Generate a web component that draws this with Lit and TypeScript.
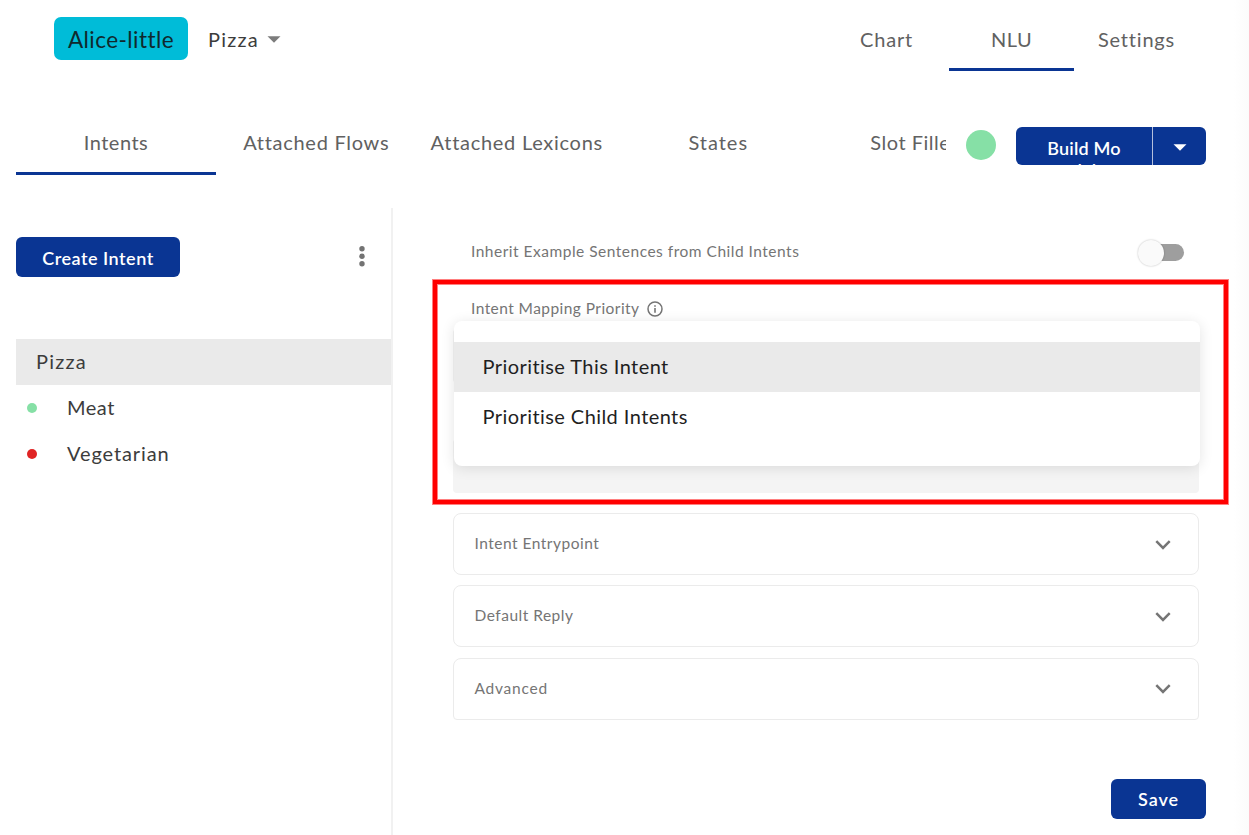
import { LitElement, html, css } from "lit";
import { customElement, property } from "lit/decorators.js";
import { classMap } from "lit/directives/class-map.js";

interface Tab { label: string; active?: boolean; cls: string; }

@customElement("nav-tab")
class NavTab extends LitElement {
  @property() label = "";
  @property({ type: Boolean, reflect: true }) active = false;
  static styles = css`
    :host { display: flex; align-items: center; justify-content: center; box-sizing: border-box;
      white-space: nowrap; border-bottom: 3px solid transparent; color: #616161; }
    :host([active]) { border-bottom-color: #0a3593; }
  `;
  render() { return html`<span>${this.label}</span>`; }
}

@customElement("accordion-row")
class AccordionRow extends LitElement {
  @property() label = "";
  static styles = css`
    :host { display: flex; align-items: center; justify-content: space-between; box-sizing: border-box;
      height: 62px; padding: 0 27px 0 20.5px; border: 1px solid #ebebeb; border-radius: 8px;
      font-size: 15.5px; color: #757575; }
    .chev { display: block; margin-top: 1px; }
    .label { margin-top: -2px; }
  `;
  render() {
    return html`<span class="label">${this.label}</span>
      <svg class="chev" width="16" height="10" viewBox="0 0 16 10">
        <path d="M1.3 1.2 L8 7.9 L14.7 1.2" fill="none" stroke="#757575" stroke-width="2.5" />
      </svg>`;
  }
}

@customElement("app-root")
class AppRoot extends LitElement {
  private intents = [
    { name: "Meat", ok: true },
    { name: "Vegetarian", ok: false },
  ];
  private sub: Tab[] = [
    { label: "Intents", active: true, cls: "t1" },
    { label: "Attached Flows", cls: "t2" },
    { label: "Attached Lexicons", cls: "t3" },
    { label: "States", cls: "t4" },
    { label: "Slot Fillers", cls: "t5" },
  ];

  static styles = css`
    :host { display: flex; flex-direction: column; position: relative; box-sizing: border-box; width: 100%;
      height: 835px; overflow: hidden; background: linear-gradient(to right, #fff 1234px, #fbfbfb 1249px);
      font-family: Lato, "Open Sans", sans-serif; font-size: 20px; letter-spacing: 0.5px; color: #3c3c3c; }
    svg { display: block; }
    .top { display: flex; height: 71px; padding: 0 50px 0 54px; flex: none; }
    .brand { margin-top: 17px; width: 134px; height: 43px; border-radius: 7px; background: #00bcd8; color: #10292d;
      font-size: 22.5px; line-height: 46px; text-align: center; letter-spacing: 0.45px; }
    .project { display: flex; align-items: center; gap: 8px; height: 79px; margin-left: 20px; }
    .pname { letter-spacing: 1.2px; margin-top: -2px; }
    .toptabs { display: flex; margin-left: auto; letter-spacing: 0.8px; }
    .toptabs nav-tab { width: 125px; padding-top: 10px; }
    .toptabs nav-tab[active] { letter-spacing: 0.5px; }
    .second { display: flex; flex: none; height: 69px; margin-top: 35px; padding: 0 43px 0 16px; }
    .subtabs { display: flex; width: 930px; overflow: hidden; letter-spacing: 0.72px; }
    .subtabs nav-tab { flex: 0 0 200.5px; padding-top: 6px; }
    .subtabs nav-tab[active] { flex-basis: 200px; letter-spacing: 0.5px; }
    .subtabs .t4 { letter-spacing: 1px; padding-left: 2px; }
    .subtabs .t5 { letter-spacing: 0.5px; padding-left: 2px; }
    .health { width: 30px; height: 30px; border-radius: 50%; background: #86e0a6; margin: 24px 20px 0; }
    .build { display: flex; width: 190px; height: 38px; margin-top: 21px; border-radius: 6px; overflow: hidden;
      background: #0a3593; color: #fff; font-weight: 600; font-size: 18px; letter-spacing: 0.2px; }
    .buildtext { flex: none; width: 137px; line-height: 22px; padding-top: 10px; text-align: center; box-sizing: border-box;
      border-right: 1px solid #b5c0dc; }
    .drop { flex: 1; display: flex; align-items: center; justify-content: center; padding-top: 3px; }
    .main { display: flex; flex: 1; margin-top: 33px; min-height: 0; }
    .side { width: 377px; margin-left: 16px; box-sizing: border-box; border-right: 2px solid #f1f1f1; padding-top: 29px; }
    .actions { display: flex; justify-content: space-between; align-items: center; height: 40px; padding-right: 24px; }
    .btn { display: flex; align-items: center; justify-content: center; height: 40px; border-radius: 6px; background: #0a3593; color: #fff;
      font-weight: 600; font-size: 18px; letter-spacing: 0.5px; padding-top: 1px; box-sizing: border-box; }
    .create { width: 164px; }
    .tree { margin-top: 62px; }
    .row { display: flex; align-items: center; height: 46px; padding-left: 11px; }
    .row.sel { background: #eaeaea; padding-left: 20px; letter-spacing: 1.2px; }
    .name { margin-top: -2px; }
    .long { letter-spacing: 0.9px; }
    .dot { width: 10px; height: 10px; border-radius: 50%; background: #e02424; margin-right: 30px; }
    .dot.ok { background: #86e0a6; }
    .panel { flex: 1; display: flex; flex-direction: column; padding: 0 43px 0 60px; }
    .setting { display: flex; align-items: center; font-size: 15.5px; color: #757575; padding-left: 18px; letter-spacing: 0.5px; }
    .setting span { margin-top: -2px; }
    .inherit { height: 30px; margin-top: 29px; justify-content: space-between; padding-right: 22px; }
    .switch { width: 43.5px; height: 17.5px; border-radius: 9px; background: #9e9e9e; display: flex; align-items: center; margin-top: 1px; }
    .knob { width: 26px; height: 26px; border-radius: 50%; background: #fafafa; margin-left: -3px; flex: none;
      box-shadow: 0 0 2px rgba(0,0,0,.28); }
    .priority { height: 24px; margin-top: 30px; gap: 7.5px; letter-spacing: 0.44px; }
    .info { margin-top: -1px; }
    .fields { position: relative; height: 172px; margin: 0 7px 0 0; display: flex; flex-direction: column; justify-content: space-between;
      padding-top: 8px; box-sizing: border-box; }
    .field { height: 54px; border-radius: 4px; background: #f4f4f4; }
    .menu { position: absolute; left: 1px; right: -1px; top: 0; height: 145px; box-sizing: border-box; padding-top: 21px; border-radius: 8px;
      background: #fff; box-shadow: 0 2px 14px rgba(0,0,0,.11); color: #1f1f1f; letter-spacing: 0.43px; }
    .item { display: flex; align-items: center; height: 50px; padding: 0 0 2px 28.5px; box-sizing: border-box; }
    .item.hi { background: #eaeaea; }
    .cards { display: flex; flex-direction: column; gap: 10.3px; margin: 20px 7px 0 0; }
    .cards accordion-row:last-child { border-radius: 8px 8px 4px 4px; letter-spacing: 0.75px; }
    .save { width: 95px; margin: 59.4px 0 0 auto; letter-spacing: 0.9px; }
    .mark { position: absolute; left: 433px; top: 280px; width: 795px; height: 224px; box-sizing: border-box; border: 4px solid #f00;
      box-shadow: 0 0 0 1px rgba(255,0,0,.5), inset 0 0 0 1px rgba(255,0,0,.5); }
  `;

  render() {
    return html`
      <header class="top">
        <div class="brand">Alice-little</div>
        <div class="project"><span class="pname">Pizza</span>
          <svg width="14" height="7" viewBox="0 0 14 7"><path d="M0.5 0.3H13.5L7 6.7z" fill="#7c7c7c"/></svg>
        </div>
        <nav class="toptabs">
          <nav-tab label="Chart"></nav-tab><nav-tab label="NLU" active></nav-tab><nav-tab label="Settings"></nav-tab>
        </nav>
      </header>
      <div class="second">
        <nav class="subtabs">${this.sub.map(t => html`<nav-tab class=${t.cls} .label=${t.label} ?active=${!!t.active}></nav-tab>`)}</nav>
        <div class="health"></div>
        <div class="build"><div class="buildtext">Build Mo<br>del</div>
          <div class="drop"><svg width="14" height="7" viewBox="0 0 14 7"><path d="M0.5 0.2H13.5L7 6.8z" fill="#fff"/></svg></div>
        </div>
      </div>
      <div class="main">
        <aside class="side">
          <div class="actions">
            <div class="btn create">Create Intent</div>
            <svg width="10" height="22" viewBox="0 0 10 22" fill="#737373"><circle cx="5" cy="2.8" r="2.7"/><circle cx="5" cy="10.3" r="2.7"/><circle cx="5" cy="17.8" r="2.7"/></svg>
          </div>
          <div class="tree">
            <div class="row sel"><span class="name">Pizza</span></div>
            ${this.intents.map(i => html`<div class="row"><i class=${classMap({ dot: true, ok: i.ok })}></i><span class=${classMap({ name: true, long: i.name.length > 5 })}>${i.name}</span></div>`)}
          </div>
        </aside>
        <section class="panel">
          <div class="setting inherit"><span>Inherit Example Sentences from Child Intents</span><div class="switch"><div class="knob"></div></div></div>
          <div class="setting priority"><span>Intent Mapping Priority</span>
            <svg class="info" width="16" height="16" viewBox="0 0 16 16"><circle cx="8" cy="8" r="7" fill="none" stroke="#757575" stroke-width="1.5"/><path d="M7.2 4.2h1.6v1.6H7.2zM7.2 7.1h1.6v4.7H7.2z" fill="#757575"/></svg>
          </div>
          <div class="fields">
            <div class="field"></div><div class="field"></div>
            <div class="menu"><div class="item hi">Prioritise This Intent</div><div class="item">Prioritise Child Intents</div></div>
          </div>
          <div class="cards">
            <accordion-row label="Intent Entrypoint"></accordion-row>
            <accordion-row label="Default Reply"></accordion-row>
            <accordion-row label="Advanced"></accordion-row>
          </div>
          <div class="btn save">Save</div>
        </section>
      </div>
      <div class="mark"></div>
    `;
  }
}
